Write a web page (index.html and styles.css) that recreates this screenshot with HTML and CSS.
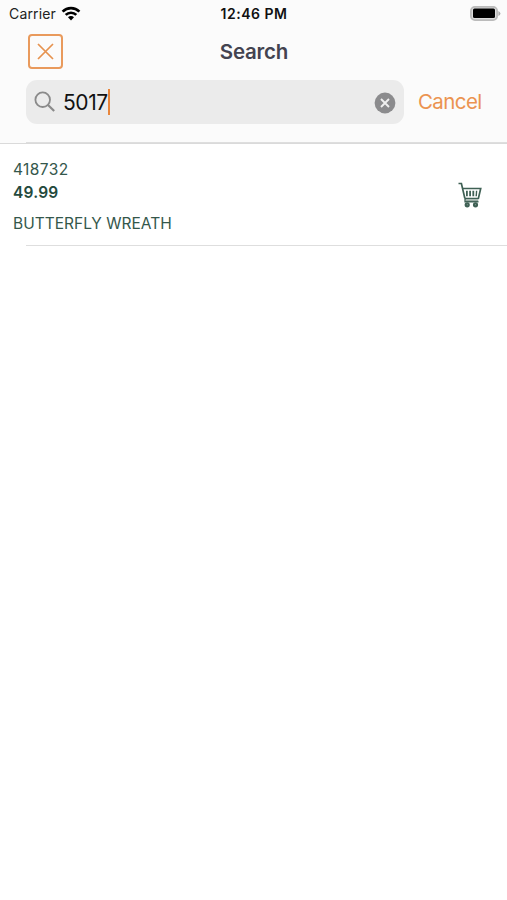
FILE: index.html
```
<!DOCTYPE html>
<html lang="en">
<head>
  <meta charset="UTF-8">
  <title>Search</title>
  <meta name="viewport" content="width=device-width, initial-scale=1.0">
  <link rel="stylesheet" href="styles.css">
</head>
<body>

  <header class="header">
    <div class="status-bar">
      <div class="carrier">
        <span>Carrier</span>
        <svg class="wifi" width="20" height="15" viewBox="0 0 20 15" fill="none" stroke="#000" stroke-width="2.7">
          <path d="M1.6 5.6a12 12 0 0 1 16.8 0"/>
          <path d="M4.7 8.9a7.6 7.6 0 0 1 10.6 0"/>
          <path d="M10 14.4l-3-3.1a4.2 4.2 0 0 1 6 0z" fill="#000" stroke="none"/>
        </svg>
      </div>
      <span class="time">12:46 PM</span>
      <svg class="battery" width="31" height="15" viewBox="0 0 31 15">
        <rect x="0.9" y="0.9" width="26.2" height="13.2" rx="4" fill="#ddd" stroke="#bbb" stroke-width="1.8"/>
        <rect x="3" y="2.5" width="22" height="9.5" rx="1.5" fill="#000"/>
        <path d="M28.4 5v5q2-1 2-2.5t-2-2.5z" fill="#aaa"/>
      </svg>
    </div>

    <div class="nav-bar">
      <button class="close" aria-label="Close">
        <svg width="17" height="17" viewBox="0 0 17 17" stroke="#e6924f" stroke-width="1.7">
          <path d="M1 1l15 15M16 1L1 16"/>
        </svg>
      </button>
      <h1>Search</h1>
    </div>

    <div class="search-bar">
      <div class="search-field">
        <svg class="search-icon" width="22" height="22" viewBox="0 0 22 22" fill="none" stroke="#8a8a8a" stroke-width="1.8">
          <circle cx="8.7" cy="8.7" r="7.3"/>
          <path d="M14 14l6.2 6" stroke-width="2.2"/>
        </svg>
        <span class="query">5017</span>
        <span class="caret"></span>
        <svg class="clear" width="22" height="22" viewBox="0 0 22 22">
          <circle cx="11" cy="11" r="10.4" fill="#8b8b8d"/>
          <path d="M7 7l8 8M15 7l-8 8" stroke="#f0f0f0" stroke-width="1.9"/>
        </svg>
      </div>
      <span class="cancel">Cancel</span>
    </div>
    <div class="separator"></div>
  </header>

  <main>
    <div class="item">
      <div class="info">
        <div class="code">418732</div>
        <div class="price">49.99</div>
        <div class="name">BUTTERFLY WREATH</div>
      </div>
      <svg class="cart" width="26" height="26" viewBox="0 0 26 26" fill="none" stroke="#3f6054" stroke-width="1.7">
        <path d="M1.500 1.500h2.900l3.500 15"/>
        <path d="M5.500 6.500h18.200l-2.300 10H7.900"/>
        <path d="M9.900 8.800v5.400M13.100 8.800v5.400M16.300 8.800v5.400" stroke-width="1.800"/>
        <path d="M19.600 8.800l-.4 5.400" stroke-width="1.400"/>
        <path d="M8.200 16.500v3.200h13.300" />
        <path d="M8.500 18.200h12.500" stroke="#9aaba4"/>
        <circle cx="10.200" cy="22.800" r="1.500" stroke-width="2.200"/>
        <circle cx="18.500" cy="22.800" r="1.500" stroke-width="2.200"/>
      </svg>
    </div>
    <div class="separator"></div>
  </main>

</body>
</html>
```

FILE: styles.css
```
body {
  margin: 0;
  background-color: #fff;
  font-family: Inter, "Liberation Sans", sans-serif;
}

.header {
  display: flex;
  flex-direction: column;
  box-sizing: border-box;
  height: 144px;
  background-color: #fbfbfb;
  border-bottom: 1px solid #dadada;
}

.separator {
  height: 1px;
  margin-left: 26px;
  background-color: #dedede;
}

.header .separator {
  margin-top: auto;
}

/* status bar */
.status-bar {
  display: grid;
  grid-template-columns: 1fr auto 1fr;
  align-items: center;
  height: 27px;
  padding: 0 6px 0 9px;
  font-size: 14px;
  color: #222;
}

.carrier {
  display: flex;
  align-items: center;
  gap: 5px;
  letter-spacing: 0.15px;
}

.wifi {
  margin-top: -1px;
}

.time {
  padding-right: 2px;
  font-size: 14px;
  font-weight: 600;
  letter-spacing: 0.5px;
  color: #111;
}

.battery {
  justify-self: end;
  margin-top: -1px;
}

/* title row */
.nav-bar {
  display: grid;
  grid-template-columns: 1fr auto 1fr;
  align-items: center;
  height: 49px;
  padding: 0 27px 0 28px;
}

.close {
  display: flex;
  align-items: center;
  justify-content: center;
  box-sizing: border-box;
  width: 35px;
  height: 35px;
  padding: 0;
  background: none;
  border: 2px solid #e99a5c;
  border-radius: 4px;
}

h1 {
  margin: 0;
  font-size: 20.5px;
  font-weight: 600;
  letter-spacing: -0.2px;
  color: #434350;
}

/* search row */
.search-bar {
  display: flex;
  align-items: center;
  padding: 4px 20px 0 26px;
}

.search-field {
  display: flex;
  flex: none;
  align-items: center;
  box-sizing: border-box;
  width: 378px;
  height: 44px;
  padding: 0 8px;
  background-color: #ebebeb;
  border-radius: 11px;
}

.query {
  margin: 1px 0 0 7px;
  font-size: 21px;
  letter-spacing: -0.4px;
  color: #111;
}

.caret {
  width: 2px;
  height: 26px;
  background-color: #e8853a;
}

.clear {
  margin: 1px 0 0 auto;
}

.cancel {
  margin: -2px 0 0 14px;
  font-size: 20.5px;
  letter-spacing: -0.6px;
  color: #eb9350;
}

/* results */
.item {
  display: flex;
  align-items: center;
  justify-content: space-between;
  box-sizing: border-box;
  height: 101px;
  padding: 3px 24px 0 13px;
  color: #34574b;
}

.info {
  font-size: 15.5px;
  line-height: 23px;
}

.code {
  letter-spacing: 0.4px;
}

.price {
  font-weight: 600;
  letter-spacing: 0.2px;
  color: #244a3d;
}

.name {
  margin-top: 8px;
}

.cart {
  margin-top: -3px;
}
```
